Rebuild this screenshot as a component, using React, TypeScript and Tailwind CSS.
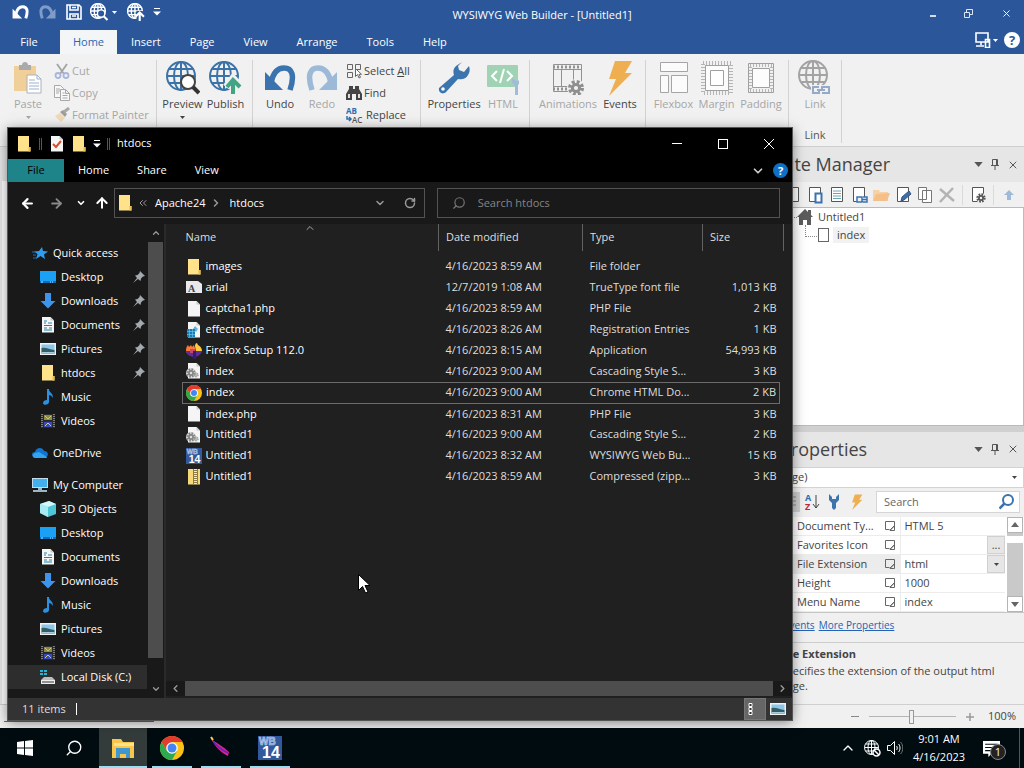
import type { ReactNode } from "react"
import {
  ArrowLeft,
  ArrowRight,
  ArrowUp,
  ChevronDown,
  ChevronLeft,
  ChevronRight,
  ChevronUp,
  ChevronsLeft,
  RotateCw,
  Search,
  X,
} from "lucide-react"

interface IconProps {
  className?: string
}

function UndoIcon({ className = "" }: IconProps) {
  return (
    <svg viewBox="0 0 32 28" className={className} fill="currentColor">
      <path d="M1 8v18h18z" />
      <path d="M7 19C9 9 14 4 20 4c8 0 11 7 6 22" fill="none" stroke="currentColor" strokeWidth="5.5" />
    </svg>
  )
}

function GlobeLines() {
  return (
    <g fill="none">
      <circle cx="15" cy="15" r="14" />
      <ellipse cx="15" cy="15" rx="7" ry="14" />
      <path d="M15 1v28M1 15h28M3 8h24M3 22h24" />
    </g>
  )
}

function PreviewIcon({ className = "" }: IconProps) {
  return (
    <svg viewBox="0 0 34 34" className={className} strokeWidth="2" stroke="#3b73a8">
      <GlobeLines />
      <circle cx="22" cy="21" r="7" fill="#fff" stroke="#444" />
      <path d="m27 26 6 6" stroke="#333" strokeWidth="4" />
    </svg>
  )
}

function PublishIcon({ className = "" }: IconProps) {
  return (
    <svg viewBox="0 0 34 34" className={className} strokeWidth="2" stroke="#3b73a8">
      <GlobeLines />
      <path d="M24 34V18m-7 8 7-9 8 9" stroke="#f0f0f0" strokeWidth="7" fill="none" />
      <path d="M24 33V19m-6 7 6-7 7 7" stroke="#41a583" strokeWidth="4" fill="none" />
    </svg>
  )
}

function WhiteGlobe({ kind }: { kind: "preview" | "publish" }) {
  return (
    <svg viewBox="0 0 34 34" className="size-[18px]" strokeWidth="2.6" stroke="#fff">
      <GlobeLines />
      {kind === "preview" ? (
        <>
          <circle cx="21" cy="20" r="7" fill="#2b579a" />
          <path d="m26 25 7 7" strokeWidth="4" />
        </>
      ) : (
        <>
          <path d="M24 34V15" stroke="#2b579a" strokeWidth="12" />
          <path d="M24 34V18m-8 8 8-8 8 8" strokeWidth="4" fill="none" />
        </>
      )}
    </svg>
  )
}

function SaveIcon() {
  return (
    <svg viewBox="0 0 16 16" className="size-4" fill="none" stroke="#fff" strokeWidth="1.6">
      <path d="M1 1h12l2 2v12H1zM4 1v5h8V1M4 15v-5h8v5M6 12h4M6 3.500h4" />
    </svg>
  )
}

function PasteIcon() {
  return (
    <svg viewBox="0 0 32 32" className="size-8">
      <path d="M2 4h22v25H2z" fill="#f0cf99" />
      <path d="M7 3h3c0-4 6-4 6 0h3v5H7z" fill="#aaa" />
      <path d="M15 13h10l4 4v14H15z" fill="#fff" stroke="#aab2bd" />
      <path d="M17 18h6M17 21h10M17 24h10M17 27h10M25 13v4h4" stroke="#9fb2cc" fill="none" />
    </svg>
  )
}

function CutIcon() {
  return (
    <svg viewBox="0 0 16 16" className="size-4" fill="none" strokeWidth="1.800">
      <path d="M3 1l7 10M13 1 6 11" stroke="#a3a3a3" />
      <circle cx="4" cy="12.500" r="2.500" stroke="#a9b6dc" />
      <circle cx="12" cy="12.500" r="2.500" stroke="#a9b6dc" />
    </svg>
  )
}

function CopyIcon() {
  return (
    <svg viewBox="0 0 16 16" className="size-4" fill="#f8f8f8" stroke="#a8a8a8">
      <path d="M.5.500h6l3 3v9h-9zM2 4h4M2 6h4M2 8h3" />
      <path d="M6.500 4.500h5l4 4v7h-9zM11.500 4.500v4h4M8.500 8h2M8.500 10.500h5M8.500 13h5" />
    </svg>
  )
}

function PainterIcon() {
  return (
    <svg viewBox="0 0 16 16" className="size-4">
      <path d="m1 9 5-3 5 5-4 4z" fill="#f0d9b5" />
      <path d="m6 5 5 5 2-3-4-4z" fill="#9d9d9d" />
      <path d="m10 5 5-4" stroke="#a8a8a8" strokeWidth="3" />
    </svg>
  )
}

function SelectAllIcon() {
  return (
    <svg viewBox="0 0 16 16" className="size-4" fill="none" stroke="#666">
      <path d="M1.500 1.500h5v5h-5zM9.500 1.500h5v5h-5zM1.500 9.500h5v5h-5z" />
      <path d="M9.500 5.500v8l2-2 1.500 3.500 1.500-.7-1.500-3h2.500z" fill="#fff" />
    </svg>
  )
}

function FindIcon() {
  return (
    <svg viewBox="0 0 16 16" className="size-4" fill="#444">
      <path d="M3 1h4v3h2V1h4v3l3 5v6h-6V9H6v6H0V9l3-5z" />
      <path d="M2 9h2v4H2zM12 9h2v4h-2z" fill="#ddd" />
    </svg>
  )
}

function ReplaceIcon() {
  return (
    <svg viewBox="0 0 18 22" className="h-[22px] w-[18px]" fontFamily="Open Sans, sans-serif" fontSize="8">
      <text x="0" y="10" fill="#2f6db0" fontWeight="700">AB</text>
      <text x="6" y="19" fill="#555" fontWeight="600">AC</text>
      <path d="M1 12v3h4m-2-2 2 2-2 2" stroke="#2f6db0" strokeWidth="1.500" fill="none" />
    </svg>
  )
}

function WrenchIcon({ className = "size-8" }: IconProps) {
  return (
    <svg viewBox="0 0 32 32" className={className} fill="#3c74ae">
      <path d="M24 0 18 4c-3 3-3 6-2 9L1 26c-1 5 4 7 7 4l12-13c4 1 8 0 10-4 2-3 2-6 1-9l-5 6-5-2-1-4z" />
      <circle cx="5" cy="27" r="1.800" fill="#fff" />
    </svg>
  )
}

function HtmlIcon() {
  return (
    <svg viewBox="0 0 32 34" className="h-[34px] w-8">
      <rect y="4" width="31" height="22" rx="1" fill="#9fd3b4" />
      <path d="m10 10-5 5 5 5M20 10l5 5-5 5M17 8l-4 14" fill="none" stroke="#fff" strokeWidth="2" />
      <path d="M25 17v5l3 2v10h3V24l3-3v-4l-3 3h-2z" fill="#a2bbda" />
    </svg>
  )
}

function Gear({ x, y, r, color }: { x: number; y: number; r: number; color: string }) {
  return (
    <g>
      <circle cx={x} cy={y} r={r} fill="none" stroke={color} strokeWidth={r / 1.5} strokeDasharray={`${r * 0.45} ${r * 0.335}`} />
      <circle cx={x} cy={y} r={r * 0.6} fill="none" stroke={color} strokeWidth={r / 2} />
    </g>
  )
}

function AnimationsIcon() {
  return (
    <svg viewBox="0 0 32 34" className="h-[34px] w-8">
      <g fill="none" stroke="#929292">
        <path d="M1.500 3.500h28v27h-28zM1 8.500h28M1 25.500h28M9.500 8v18M21.500 8v18" />
        <path d="M1 6h28M1 28h28" strokeWidth="3" strokeDasharray="2 2" />
      </g>
      <circle cx="24" cy="27" r="9" fill="#f0f0f0" />
      <Gear x={24} y={27} r={6} color="#8e8e8e" />
    </svg>
  )
}

function BoltIcon({ className = "h-9 w-8" }: IconProps) {
  return (
    <svg viewBox="0 0 32 36" className={className}>
      <path d="M11 1h17l-7 12h7L5 36l7-17H5z" fill="#efae50" />
    </svg>
  )
}

function FlexboxIcon() {
  return (
    <svg viewBox="0 0 32 34" className="h-[34px] w-8" fill="#fbfbfb" stroke="#a5a5a5">
      <path d="M2.500 1.500h27v9h-27zM2.500 14.500h8v17h-8zM13.500 14.500h16v17h-16z" />
    </svg>
  )
}

function BoxModelIcon({ outer }: { outer: boolean }) {
  return (
    <svg viewBox="0 0 34 36" className="h-9 w-[34px]">
      <rect
        x={outer ? 3 : 6}
        y={outer ? 3 : 5}
        width={outer ? 28 : 22}
        height={outer ? 30 : 26}
        fill="none"
        stroke="#b5b5b5"
        strokeWidth="4"
        strokeDasharray="1 2"
      />
      <path d={outer ? "M5.500 5.500h23v25h-23z" : "M8.500 8.500h17v19h-17z"} fill="#fcfcfc" stroke="#a0a0a0" />
      {outer ? (
        <path d="M10.500 10.500h13v15h-13z" fill="#fff" stroke="#a0a0a0" />
      ) : (
        <path d="M4.500 3.500h25v29h-25z" fill="none" stroke="#a0a0a0" />
      )}
    </svg>
  )
}

function LinkIcon() {
  return (
    <svg viewBox="0 0 34 36" className="h-9 w-[34px]" strokeWidth="2" stroke="#a3a3a3">
      <GlobeLines />
      <path d="M13 25h20v11H13z" fill="#f0f0f0" stroke="none" />
      <path d="M21 27h-6v6h6v-3M24 33h7v-6h-7v3M19 30h8" fill="none" stroke="#95aac9" />
    </svg>
  )
}

function FolderIcon({ className = "size-4" }: IconProps) {
  return (
    <svg viewBox="0 0 16 16" className={className}>
      <path d="M2 0h11v11h1.500v4.500H2z" fill="#ffe28a" />
      <path d="M12.500 11h2v4.500h-2z" fill="#e9bd4f" />
    </svg>
  )
}

function PageShape({ children }: { children?: ReactNode }) {
  return (
    <svg viewBox="0 0 16 16" className="size-4">
      <path d="M2 0h8.500L14 3.500V15.500H2z" fill="#f5f5f5" />
      <path d="M10.500 0v3.500H14" fill="#c9c9c9" />
      {children}
    </svg>
  )
}

function StarIcon() {
  return (
    <svg viewBox="0 0 16 16" className="size-4">
      <path d="m10 2 1 4 5 .500-4 3 1 4.500-4.500-3L4 14l1.500-5L2 6.500 7 6z" fill="#2e9df0" />
      <path d="M0 7h4M1 10h3M1 13h3" stroke="#1c6eb5" />
    </svg>
  )
}

function DesktopIcon() {
  return (
    <svg viewBox="0 0 16 16" className="size-4">
      <path d="M0 2h16v12H0z" fill="#1aa1f5" />
      <path d="M0 12h16v2H0z" fill="#0b6dba" />
      <path d="M1 13h2M10 13h1M12 13h1" stroke="#bfe6ff" />
    </svg>
  )
}

function DownloadIcon() {
  return (
    <svg viewBox="0 0 16 16" className="size-4">
      <path d="M5 0h6v8h4.500L8 15.500.5 8H5z" fill="#3d94ec" />
    </svg>
  )
}

function DocumentIcon() {
  return (
    <PageShape>
      <path d="M4 4h3M4 6h2M8 6h4M4 8.500h8M4 11h3M9 11h3M4 13h8" stroke="#2483a8" />
    </PageShape>
  )
}

function PictureIcon() {
  return (
    <svg viewBox="0 0 16 16" className="size-4">
      <path d="M0 2h16v12H0z" fill="#f1f1f1" />
      <path d="M1.500 3.500h13v9h-13z" fill="#8ac7ea" />
      <path d="M1.500 7c5-1 8 2 13 2v3.500h-13z" fill="#355d66" />
      <path d="M1.500 11h13v1.500h-13z" fill="#a9cddc" />
    </svg>
  )
}

function MusicIcon() {
  return (
    <svg viewBox="0 0 16 16" className="size-4">
      <path d="M7 0h2c0 4 5 4 3.500 9-.500-2-2-3-3.500-3v7c0 3-6 4-6 1 0-2 2-3 4-3z" fill="#2a91e0" />
    </svg>
  )
}

function VideoIcon() {
  return (
    <svg viewBox="0 0 16 16" className="size-4">
      <path d="M1 1h14v14H1z" fill="#2a2a2a" />
      <path d="M2 1v14M14 1v14" stroke="#999" strokeWidth="1.500" strokeDasharray="1 1" />
      <path d="M4 2h8v5H4z" fill="#8c8b45" />
      <path d="M4 9h8v5H4z" fill="#3c4bb5" />
      <path d="m5 3 3 3 3-3M5 13l3-3 3 3" stroke="#c8cb7d" fill="none" />
    </svg>
  )
}

function CloudIcon() {
  return (
    <svg viewBox="0 0 16 16" className="size-4">
      <path d="M3 12c-4 0-4-5 0-5 1-5 8-5 9-1 5 0 5 6 1 6z" fill="#1175cf" />
      <path d="M3 13c-3 0-3-4 0-5l4-1 8 5c0 1-1 1-2 1z" fill="#34a4f0" />
    </svg>
  )
}

function ComputerIcon() {
  return (
    <svg viewBox="0 0 16 16" className="size-4">
      <path d="M0 1h16v10H0z" fill="#c2dced" />
      <path d="M1 2h14v8H1z" fill="#43b0ee" />
      <path d="M6 11h4v2H6zM1 13h14v2H1z" fill="#9ab6c6" />
    </svg>
  )
}

function CubeIcon() {
  return (
    <svg viewBox="0 0 16 16" className="size-4">
      <path d="m0 3 9-3 7 3v10l-8 3-8-4z" fill="#4fc5d8" />
      <path d="m0 3 8 3v10l-8-4z" fill="#a6ebf2" />
      <path d="m0 3 9-3 7 3-8 3z" fill="#d2f8fb" />
    </svg>
  )
}

function DiskIcon() {
  return (
    <svg viewBox="0 0 16 16" className="size-4">
      <path d="M0 1h3v2H0zM4 1h3v2H4zM0 4h3v2H0zM4 4h3v2H4z" fill="#25b4d6" />
      <path d="M4 8h8l3 3H1z" fill="#bdbdbd" />
      <path d="M1 11h14v4H1z" fill="#ededed" />
      <path d="M2 12.500h12v1H2z" fill="#333" />
    </svg>
  )
}

function PinIcon() {
  return (
    <svg viewBox="0 0 12 12" className="size-3">
      <path d="m7 0 5 5-2 .500L8 7.500 7.500 10 5 8l-5 4 4-5-2-2.500L4.500 4l2-2z" fill="#a3a9ae" />
    </svg>
  )
}

function ChromeIcon({ className = "size-4" }: IconProps) {
  return (
    <svg viewBox="0 0 24 24" className={className}>
      <circle cx="12" cy="12" r="12" fill="#fbc116" />
      <path d="M1.600 6a12 12 0 0 1 20.800 0H12l-5 9z" fill="#e33b2e" />
      <path d="M1.600 6A12 12 0 0 0 12 24l5-9-10 0z" fill="#2da94f" />
      <circle cx="12" cy="12" r="5.800" fill="#fff" />
      <circle cx="12" cy="12" r="4.500" fill="#4285f4" />
    </svg>
  )
}

function FirefoxIcon() {
  return (
    <svg viewBox="0 0 16 16" className="size-4">
      <path d="M0 9c0-3 0-5 2-7l1 2 2-2 1 2 2-2 1 3v6H2z" fill="#ff7a35" />
      <path d="M9 3c0-2 1-3 2-3l1 2c2 1 4 3 4 6l-6 1z" fill="#ffcb38" />
      <path d="M0 8h16c-1 4-5 6-9 6-4-1-7-3-7-6z" fill="#5b2d98" />
      <path d="M4 6h5v4H4z" fill="#c8466f" />
      <path d="M7 8h3v8H7z" fill="#321d64" />
    </svg>
  )
}

function WbIcon({ className = "size-4" }: IconProps) {
  return (
    <svg viewBox="0 0 24 24" className={className} fontFamily="Liberation Sans, sans-serif" fontWeight="700">
      <path d="M0 0h24v24H0z" fill="#31599b" />
      <text x="1" y="9" fontSize="10" fill="#7e9fd0" stroke="#c7d6ed" strokeWidth=".5">WB</text>
      <text x="4" y="22" fontSize="16" fill="#fff">14</text>
    </svg>
  )
}

function CssIcon() {
  return (
    <PageShape>
      <circle cx="5" cy="10" r="5" fill="#ddd" />
      <Gear x={5} y={10} r={3.500} color="#858585" />
      <Gear x={10} y={12} r={2} color="#999" />
    </PageShape>
  )
}

function RegIcon() {
  return (
    <PageShape>
      <path d="m9 4 3 3-2 3-3-3z" fill="#5fb5de" />
      <path d="M1 7h8v8H1z" fill="#167bb0" />
      <path d="M3.500 7v8M6.500 7v8M1 9.500h8M1 12.500h8" stroke="#67c0e8" strokeWidth=".7" />
    </PageShape>
  )
}

function FontIcon() {
  return (
    <svg viewBox="0 0 16 16" className="size-4">
      <path d="M0 1h12l4 3v9H0z" fill="#e9e9ec" />
      <text x="2" y="12" fontSize="10" fontWeight="700" fontFamily="Liberation Serif, serif" fill="#444">A</text>
    </svg>
  )
}

function ZipIcon() {
  return (
    <svg viewBox="0 0 16 16" className="size-4">
      <path d="M2 0h12v15.500H2z" fill="#f6d978" />
      <path d="M7 0h5v15H7z" fill="#8b7b4d" />
      <path d="M9.500 0v15" stroke="#f4ead0" strokeWidth="3" strokeDasharray="1 1" />
    </svg>
  )
}

function DownTriangle({ className = "" }: IconProps) {
  return (
    <svg viewBox="0 0 10 6" className={className} fill="currentColor">
      <path d="M0 0h10L5 6z" />
    </svg>
  )
}

function OverflowIcon() {
  return (
    <svg viewBox="0 0 8 8" className="size-2" fill="currentColor">
      <path d="M1 0h6v1H1zM0 3.500h8l-4 4z" />
    </svg>
  )
}

function MainTitleBar() {
  return (
    <header className="flex h-[30px] items-center bg-[#2b579a] text-white">
      <div className="flex w-[200px] items-center pb-1.5 pl-3">
        <button type="button" aria-label="Undo"><UndoIcon className="h-4 w-[17px]" /></button>
        <button type="button" aria-label="Redo" className="ml-2.5 text-[#7f9bc8]"><UndoIcon className="h-4 w-[17px] -scale-x-100" /></button>
        <button type="button" aria-label="Save" className="ml-2.5"><SaveIcon /></button>
        <button type="button" aria-label="Preview in browser" className="ml-2 flex items-center gap-1">
          <WhiteGlobe kind="preview" />
          <DownTriangle className="h-[3px] w-[5px]" />
        </button>
        <button type="button" aria-label="Publish site" className="ml-2.5"><WhiteGlobe kind="publish" /></button>
        <button type="button" aria-label="Customize toolbar" className="ml-2"><OverflowIcon /></button>
      </div>
      <h1 className="flex-1 text-center text-[11px]">WYSIWYG Web Builder - [Untitled1]</h1>
      <div className="flex w-[140px] items-center justify-end gap-7 pr-3 pb-1">
        <button type="button" aria-label="Minimize" className="mt-1.5 h-0.5 w-1.5 bg-white/80" />
        <button type="button" aria-label="Restore">
          <svg viewBox="0 0 9 9" className="size-[9px]" fill="none" stroke="#dce6f5">
            <path d="M.5 3.500h5v5h-5zM2.500 3.500v-3h6v5h-3" />
          </svg>
        </button>
        <button type="button" aria-label="Close"><X className="size-[11px]" /></button>
      </div>
    </header>
  )
}

function MainTabs() {
  return (
    <nav className="flex h-6 items-stretch bg-[#2b579a] text-[11px] text-white">
      <button type="button" className="w-[58px]">File</button>
      <button type="button" className="ml-0.5 w-[57px] bg-[#f4f5f7] text-[#2b66b0]">Home</button>
      <div className="flex gap-px">
        {["Insert", "Page", "View", "Arrange", "Tools", "Help"].map((tab) => (
          <button key={tab} type="button" className="px-3.5">{tab}</button>
        ))}
      </div>
      <div className="ml-auto flex items-center gap-0.5 pr-1 pb-1">
        <svg viewBox="0 0 16 16" className="size-4" fill="none" stroke="#fff" strokeWidth="1.600">
          <path d="M1 1h12v9H1zM1 14h8M6 10v3M10.500 7.500h4v8h-4z" fill="#2b579a" />
        </svg>
        <DownTriangle className="h-[3px] w-[5px]" />
        <button type="button" aria-label="Help topics" className="ml-1 size-4 rounded-full bg-white text-[13px] leading-4 font-bold text-[#2b579a]">?</button>
      </div>
    </nav>
  )
}

interface BigButtonProps {
  label: string
  icon: ReactNode
  width: string
  disabled?: boolean
  menu?: boolean
}

function BigButton({ label, icon, width, disabled, menu }: BigButtonProps) {
  return (
    <button type="button" disabled={disabled} className={`flex shrink-0 flex-col items-center ${width} ${disabled ? "text-[#a6a6a6]" : "text-[#444]"}`}>
      <span className="flex h-9 items-center justify-center">{icon}</span>
      <span className="leading-4 whitespace-nowrap">{label}</span>
      {menu ? <DownTriangle className="mt-1 h-[3px] w-[5px]" /> : null}
    </button>
  )
}

function SmallButton({ label, icon, disabled }: { label: ReactNode; icon: ReactNode; disabled?: boolean }) {
  return (
    <button type="button" disabled={disabled} className={`flex h-[22px] items-center gap-0.5 whitespace-nowrap ${disabled ? "text-[#a6a6a6]" : "text-[#444]"}`}>
      {icon}
      {label}
    </button>
  )
}

function RibbonGroup({ children, label, className = "" }: { children: ReactNode; label?: string; className?: string }) {
  return (
    <section className={`flex shrink-0 flex-col border-r border-[#d2d2d2] ${className}`}>
      <div className="flex h-[68px]">{children}</div>
      {label ? <p className="pt-1 text-center leading-4 text-[#555]">{label}</p> : null}
    </section>
  )
}

function Ribbon() {
  return (
    <div className="flex h-[93px] border-b border-[#cfcfcf] bg-[#f1f1f1] pt-1.5 pb-[3px] text-[11px]">
      <RibbonGroup className="w-[157px] pl-0.5">
        <BigButton label="Paste" width="w-[52px]" icon={<PasteIcon />} disabled menu />
        <div>
          <SmallButton label="Cut" icon={<CutIcon />} disabled />
          <SmallButton label="Copy" icon={<CopyIcon />} disabled />
          <SmallButton label="Format Painter" icon={<PainterIcon />} disabled />
        </div>
      </RibbonGroup>
      <RibbonGroup className="w-24 pl-1">
        <BigButton label="Preview" width="w-[43px]" icon={<PreviewIcon className="size-[34px]" />} menu />
        <BigButton label="Publish" width="w-[43px]" icon={<PublishIcon className="size-[34px]" />} />
      </RibbonGroup>
      <RibbonGroup className="w-[168px] pl-1.5">
        <BigButton label="Undo" width="w-[42px]" icon={<UndoIcon className="h-7 w-8 text-[#3b73ae]" />} />
        <BigButton label="Redo" width="w-[42px]" icon={<UndoIcon className="h-7 w-8 -scale-x-100 text-[#9db9d8]" />} disabled />
        <div className="pl-[3px]">
          <SmallButton label={<span>Select <u>A</u>ll</span>} icon={<SelectAllIcon />} />
          <SmallButton label="Find" icon={<FindIcon />} />
          <SmallButton label="Replace" icon={<ReplaceIcon />} />
        </div>
      </RibbonGroup>
      <RibbonGroup className="w-[109px] pl-1">
        <BigButton label="Properties" width="w-[58px]" icon={<WrenchIcon />} />
        <BigButton label="HTML" width="w-10" icon={<HtmlIcon />} disabled />
      </RibbonGroup>
      <RibbonGroup className="w-[116px] pl-2">
        <BigButton label="Animations" width="w-[60px]" icon={<AnimationsIcon />} disabled />
        <BigButton label="Events" width="w-11" icon={<BoltIcon />} />
      </RibbonGroup>
      <RibbonGroup className="w-[143px] pl-1.5">
        <BigButton label="Flexbox" width="w-[43px]" icon={<FlexboxIcon />} disabled />
        <BigButton label="Margin" width="w-[43px]" icon={<BoxModelIcon outer />} disabled />
        <BigButton label="Padding" width="w-[46px]" icon={<BoxModelIcon outer={false} />} disabled />
      </RibbonGroup>
      <RibbonGroup className="w-[53px]" label="Link">
        <BigButton label="Link" width="w-[52px]" icon={<LinkIcon />} disabled />
      </RibbonGroup>
    </div>
  )
}

function PanelHeader({ title }: { title: string }) {
  return (
    <div className="flex h-[35px] items-center bg-[#e6e6e6] pr-[5px] pl-1.5">
      <h2 className="text-[18px] text-[#444]">{title}</h2>
      <div className="ml-auto flex items-center gap-2 text-[#555]">
        <button type="button" aria-label={`${title} menu`}><DownTriangle className="h-[5px] w-[9px]" /></button>
        <button type="button" aria-label={`Pin ${title}`}>
          <svg viewBox="0 0 8 11" className="h-[11px] w-2" fill="none" stroke="currentColor">
            <path d="M1.500 6V.500h5V6M0 6.500h8M4 7v4M5.500 1v5" />
          </svg>
        </button>
        <button type="button" aria-label={`Close ${title}`}><X className="size-3" /></button>
      </div>
    </div>
  )
}

function SheetIcon({ children }: { children?: ReactNode }) {
  return (
    <svg viewBox="0 0 18 18" className="size-[18px]" fill="none" stroke="#555">
      <path d="M3.500 1.500h11v14h-11z" fill="#fff" />
      {children}
    </svg>
  )
}

function SiteManager() {
  return (
    <section className="flex min-h-0 flex-1 flex-col">
      <PanelHeader title="Site Manager" />
      <div className="flex h-[25px] items-center gap-1 bg-[#f0f0f0] pl-2.5">
        <SheetIcon />
        <SheetIcon><path d="M9.500 7.500h6v9h-6z" stroke="#3b73ae" strokeWidth="2" fill="#fff" /></SheetIcon>
        <SheetIcon><path d="M5 5h8M5 7.500h8M5 10h8M5 12.500h8" stroke="#6ca3b2" /></SheetIcon>
        <SheetIcon><path d="M7 11h5v5H7zM12 13.500h5M13 11h4v5h-4" stroke="#3b73ae" strokeWidth="1.500" fill="#f0f0f0" /></SheetIcon>
        <svg viewBox="0 0 18 18" className="size-[18px]"><path d="M1 4h6l1 2h8v9H1z" fill="#f8d2a6" /><path d="m4 8 14-1-3 8H1z" fill="#f4c08a" /></svg>
        <SheetIcon><path d="m7 15 1-4 7-6 2 3-7 6z" fill="#3f6cab" stroke="#34547f" /></SheetIcon>
        <svg viewBox="0 0 18 18" className="size-[18px]" fill="#fff" stroke="#777"><path d="M2.500 1.500h8v12h-8zM6.500 4.500h9v12h-9z" /></svg>
        <svg viewBox="0 0 18 18" className="size-[18px]" stroke="#b3b3b3" strokeWidth="2.500"><path d="M2 3l14 12M15 2 2 16" /></svg>
        <span className="mx-0.5 h-5 w-px bg-[#dadada]" />
        <SheetIcon><circle cx="12" cy="12" r="5" fill="#f0f0f0" stroke="none" /><Gear x={12} y={12} r={3.500} color="#555" /></SheetIcon>
        <span className="mx-0.5 h-5 w-px bg-[#dadada]" />
        <svg viewBox="0 0 18 18" className="size-[18px]"><path d="m9 4 5 5h-3v5H7V9H4z" fill="#9dbbd9" /></svg>
      </div>
      <div className="flex-1 border border-[#bababa] bg-white text-[11px] text-[#444]">
        <div className="flex h-[18px] items-center pl-3.5">
          <span className="w-2 border-t border-dotted border-[#888]" />
          <svg viewBox="0 0 16 16" className="size-4"><path d="M8 0 0 8h2v8h4v-5h4v5h4V8h2l-2-2V1h-3v2z" fill="#5c5c5c" /></svg>
          <span className="ml-[5px]">Untitled1</span>
        </div>
        <div className="flex h-[18px] items-center pl-[30px]">
          <span className="mb-2 h-3 w-3 border-b border-l border-dotted border-[#888]" />
          <span className="ml-px h-3.5 w-[11px] border border-[#666]" />
          <span className="ml-1 bg-[#f2f2f2] px-1">index</span>
        </div>
      </div>
    </section>
  )
}

const properties = [
  { name: "Document Ty...", value: "HTML 5" },
  { name: "Favorites Icon", value: "" },
  { name: "File Extension", value: "html" },
  { name: "Height", value: "1000" },
  { name: "Menu Name", value: "index" },
]

function PropertyGrid() {
  return (
    <div className="flex border-b border-[#c6c6c6] bg-white pr-px">
      <table className="w-full table-fixed border-collapse text-[11px] text-[#444]">
        <tbody>
          {properties.map((prop) => {
            const active = prop.name === "File Extension"
            return (
              <tr key={prop.name} className="h-[19px] border-b border-[#ececec]">
                <th scope="row" className={`w-[106px] pl-[23px] text-left font-normal whitespace-nowrap ${active ? "bg-[#ececec]" : ""}`}>{prop.name}</th>
                <td className={`w-5 border-r border-[#ececec] ${active ? "bg-[#ececec]" : ""}`}>
                  <svg viewBox="0 0 10 10" className="ml-[5px] size-2.5" fill="none" stroke="#666">
                    <path d="M9.500 5V.500h-9v8h4M9.500 5v4.500H5zM5 9l4-4" />
                  </svg>
                </td>
                <td className="pl-1">
                  <div className="flex h-[18px] items-center">
                    {prop.value}
                    {prop.name === "Favorites Icon" ? (
                      <button type="button" className="ml-auto h-full w-[18px] border border-[#d0d0d0] bg-[#e6e6e6] leading-3">...</button>
                    ) : null}
                    {active ? (
                      <button type="button" aria-label="Choose extension" className="ml-auto flex h-full w-[18px] items-center justify-center border border-[#d0d0d0] bg-[#e6e6e6]">
                        <DownTriangle className="h-[3px] w-[5px]" />
                      </button>
                    ) : null}
                  </div>
                </td>
              </tr>
            )
          })}
        </tbody>
      </table>
      <div className="ml-0.5 flex w-4 shrink-0 flex-col bg-[#c9c9c9] text-[#666]">
        <button type="button" aria-label="Scroll up" className="flex h-4 items-center justify-center border border-[#b4b4b4] bg-white"><DownTriangle className="h-[5px] w-2 rotate-180" /></button>
        <span className="mt-[3px] h-[7px] bg-white" />
        <button type="button" aria-label="Scroll down" className="mt-auto flex h-4 items-center justify-center border border-[#b4b4b4] bg-white"><DownTriangle className="h-[5px] w-2" /></button>
      </div>
    </div>
  )
}

function PropertiesPanel() {
  return (
    <section className="mt-1.5 shrink-0 bg-[#f0f0f0] text-[11px] text-[#444]">
      <PanelHeader title="Properties" />
      <button type="button" className="flex h-[21px] w-full items-center justify-between border border-[#d3d3d3] bg-white pr-1.5 pl-px">
        (page)
        <DownTriangle className="h-[3px] w-[5px]" />
      </button>
      <div className="flex h-[29px] items-center gap-1 pr-1">
        <span className="flex h-5 w-[26px] items-center justify-end bg-[#cfcfcf] pr-1">
          <svg viewBox="0 0 10 12" className="h-3 w-2.5" stroke="#8a8a8a"><path d="M0 1h10M0 5h10M0 9h10" /></svg>
        </span>
        <svg viewBox="0 0 16 22" className="h-[22px] w-4" fontFamily="Open Sans, sans-serif" fontSize="9" fontWeight="700">
          <text x="1" y="10" fill="#2f6db0">A</text>
          <text x="1" y="19" fill="#c3262e">Z</text>
          <path d="M12 4v13m-3-4 3 4 3-4" stroke="#444" fill="none" />
        </svg>
        <svg viewBox="0 0 12 16" className="mx-1 h-4 w-3"><path d="M1 0v6l3 3v5l2 2 2-2V9l3-3V0L8 3v2H4V3z" fill="#3c74ae" /></svg>
        <BoltIcon className="h-4 w-[18px]" />
        <label className="ml-auto flex h-[22px] w-[144px] items-center border border-[#d5d5d5] bg-white">
          <input type="text" aria-label="Search properties" placeholder="Search" className="w-full bg-transparent pl-[7px] placeholder:text-[#666]" />
          <svg viewBox="0 0 16 16" className="mr-1 size-4 shrink-0" fill="none" stroke="#3b73ae" strokeWidth="2"><circle cx="9" cy="6" r="5" /><path d="m5.500 9.500-5 5" strokeWidth="2.500" /></svg>
        </label>
      </div>
      <PropertyGrid />
      <div className="h-[29px] pt-1 pl-2.5 text-[10px] leading-4 text-[#2463b4]">
        <a href="#events" className="underline">Events</a>
        <a href="#more" className="ml-1 underline">More Properties</a>
      </div>
      <div className="h-[62px] border-t border-[#cdcdcd] pt-[3px] pl-1.5">
        <p className="leading-4 font-bold">File Extension</p>
        <p className="pt-px leading-[15px]">Specifies the extension of the output html page.</p>
      </div>
    </section>
  )
}

function StatusBar() {
  return (
    <footer className="flex h-6 shrink-0 items-center border-t border-[#cfcfcf] bg-[#f0f0f0] text-[11px] text-[#444]">
      <a href="#home" aria-label="Web site" className="ml-1 h-[17px] w-[150px] self-start border-b border-[#3b73ae]" />
      <div className="ml-auto flex items-center pr-2">
        <span className="h-px w-2 bg-[#888]" />
        <div className="relative mx-2.5 flex h-4 w-[87px] items-center">
          <input type="range" aria-label="Zoom" className="absolute inset-0 w-full opacity-0" />
          <span className="h-px w-full bg-[#b5b5b5]" />
          <span className="absolute left-10 h-3.5 w-[5px] border border-[#999] bg-[#f0f0f0]" />
        </div>
        <svg viewBox="0 0 8 8" className="mr-1 size-2" stroke="#999" strokeWidth="1.500"><path d="M4 0v8M0 4h8" /></svg>
        <span className="ml-2.5">100%</span>
      </div>
    </footer>
  )
}

interface NavItem {
  label: string
  icon: ReactNode
  pinned?: boolean
  root?: boolean
  gap?: boolean
}

const navItems: NavItem[] = [
  { label: "Quick access", icon: <StarIcon />, root: true },
  { label: "Desktop", icon: <DesktopIcon />, pinned: true },
  { label: "Downloads", icon: <DownloadIcon />, pinned: true },
  { label: "Documents", icon: <DocumentIcon />, pinned: true },
  { label: "Pictures", icon: <PictureIcon />, pinned: true },
  { label: "htdocs", icon: <FolderIcon />, pinned: true },
  { label: "Music", icon: <MusicIcon /> },
  { label: "Videos", icon: <VideoIcon /> },
  { label: "OneDrive", icon: <CloudIcon />, root: true, gap: true },
  { label: "My Computer", icon: <ComputerIcon />, root: true, gap: true },
  { label: "3D Objects", icon: <CubeIcon /> },
  { label: "Desktop", icon: <DesktopIcon /> },
  { label: "Documents", icon: <DocumentIcon /> },
  { label: "Downloads", icon: <DownloadIcon /> },
  { label: "Music", icon: <MusicIcon /> },
  { label: "Pictures", icon: <PictureIcon /> },
  { label: "Videos", icon: <VideoIcon /> },
  { label: "Local Disk (C:)", icon: <DiskIcon /> },
]

interface FileRow {
  name: string
  icon: ReactNode
  date: string
  type: string
  size: string
  focused?: boolean
}

const files: FileRow[] = [
  { name: "images", icon: <FolderIcon />, date: "4/16/2023 8:59 AM", type: "File folder", size: "" },
  { name: "arial", icon: <FontIcon />, date: "12/7/2019 1:08 AM", type: "TrueType font file", size: "1,013 KB" },
  { name: "captcha1.php", icon: <PageShape />, date: "4/16/2023 8:59 AM", type: "PHP File", size: "2 KB" },
  { name: "effectmode", icon: <RegIcon />, date: "4/16/2023 8:26 AM", type: "Registration Entries", size: "1 KB" },
  { name: "Firefox Setup 112.0", icon: <FirefoxIcon />, date: "4/16/2023 8:15 AM", type: "Application", size: "54,993 KB" },
  { name: "index", icon: <CssIcon />, date: "4/16/2023 9:00 AM", type: "Cascading Style S...", size: "3 KB" },
  { name: "index", icon: <ChromeIcon />, date: "4/16/2023 9:00 AM", type: "Chrome HTML Do...", size: "2 KB", focused: true },
  { name: "index.php", icon: <PageShape />, date: "4/16/2023 8:31 AM", type: "PHP File", size: "3 KB" },
  { name: "Untitled1", icon: <CssIcon />, date: "4/16/2023 9:00 AM", type: "Cascading Style S...", size: "2 KB" },
  { name: "Untitled1", icon: <WbIcon />, date: "4/16/2023 8:32 AM", type: "WYSIWYG Web Bu...", size: "15 KB" },
  { name: "Untitled1", icon: <ZipIcon />, date: "4/16/2023 8:59 AM", type: "Compressed (zipp...", size: "3 KB" },
]

function ExplorerHeader() {
  return (
    <>
      <div className="flex h-[31px] items-center bg-black">
        <div className="flex items-center pl-2">
          <FolderIcon />
          <span className="ml-[7px] h-3 w-[3px] border-x border-[#555]" />
          <span className="ml-[7px]"><PageShape><path d="m4 8 3 3 5-6" stroke="#d2502f" strokeWidth="2" fill="none" /></PageShape></span>
          <span className="ml-1.5"><FolderIcon /></span>
          <span className="ml-1.5"><OverflowIcon /></span>
          <span className="ml-1.5 h-3 w-[3px] border-x border-[#555]" />
        </div>
        <h2 className="ml-[7px]">htdocs</h2>
        <div className="ml-auto flex items-center gap-9 pr-[18px]">
          <button type="button" aria-label="Minimize" className="h-px w-2.5 bg-white" />
          <button type="button" aria-label="Maximize" className="size-2.5 border border-white" />
          <button type="button" aria-label="Close window">
            <svg viewBox="0 0 10 10" className="size-2.5" stroke="#fff"><path d="m0 0 10 10M10 0 0 10" /></svg>
          </button>
        </div>
      </div>
      <div className="flex h-[23px] items-stretch bg-black">
        <button type="button" className="w-14 bg-[#1f8489] text-black">File</button>
        {["Home", "Share", "View"].map((tab) => (
          <button key={tab} type="button" className="px-3.5">{tab}</button>
        ))}
        <div className="ml-auto flex items-center gap-2 pr-1">
          <ChevronDown className="size-3.5 text-[#ccc]" strokeWidth={3} />
          <button type="button" aria-label="Explorer help" className="size-[15px] rounded-full bg-[#0f6fc6] leading-[15px] font-bold">?</button>
        </div>
      </div>
      <div className="flex h-[42px] items-center px-3">
        <div className="flex w-[94px] items-center">
          <ArrowLeft className="size-[15px]" strokeWidth={3.5} />
          <ArrowRight className="ml-3.5 size-[15px] text-[#8a8a8a]" strokeWidth={3} />
          <ChevronDown className="ml-3 size-2.5" strokeWidth={4} />
          <ArrowUp className="ml-2 size-4" strokeWidth={3} />
        </div>
        <div className="flex h-[30px] flex-[312] items-center border border-[#535353] bg-[#191919] pr-2 pl-0.5">
          <FolderIcon />
          <ChevronsLeft className="ml-1 size-3 text-[#999]" />
          <span className="ml-1.5">Apache24</span>
          <ChevronRight className="mx-1 size-3 text-[#999]" strokeWidth={3} />
          <span className="ml-1">htdocs</span>
          <ChevronDown className="mr-[18px] ml-auto size-3 text-[#999]" strokeWidth={3} />
          <RotateCw className="size-3 text-[#999]" strokeWidth={3} />
        </div>
        <label className="ml-3 flex h-[30px] flex-[342] items-center border border-[#535353] bg-[#191919] pl-3.5">
          <Search className="size-3.5 -scale-x-100 text-[#777]" />
          <input type="text" aria-label="Search folder" placeholder="Search htdocs" className="ml-3 min-w-0 flex-1 bg-transparent placeholder:text-[#858585]" />
        </label>
      </div>
    </>
  )
}

function Sidebar() {
  return (
    <aside className="flex w-[158px] shrink-0 border-r-2 border-[#2a2a2a]">
      <ul className="w-[140px] pt-[17px]">
        {navItems.map((item, i) => (
          <li
            key={i}
            className={`flex h-6 w-[139px] items-center gap-[5px] ${item.root ? "pl-6" : "pl-8"} ${item.gap ? "mt-2" : ""} ${item.label.startsWith("Local") ? "bg-[#2d2d2d]" : ""}`}
          >
            {item.icon}
            <span className="whitespace-nowrap">{item.label}</span>
            {item.pinned ? <span className="ml-auto pr-0.5"><PinIcon /></span> : null}
          </li>
        ))}
      </ul>
      <div className="flex w-[15px] flex-col items-center text-[#999]">
        <ChevronUp className="my-1 size-2.5" strokeWidth={3} />
        <span className="w-full flex-1 bg-[#4d4d4d]" />
        <ChevronDown className="mt-[26px] mb-1 size-2.5" strokeWidth={3} />
      </div>
    </aside>
  )
}

function FileList() {
  return (
    <section className="flex min-w-0 flex-1 flex-col bg-[#202020]">
      <div className="relative flex-1 pr-2 pl-4">
        <ChevronUp className="absolute -top-0.5 left-[138px] size-3 text-[#aaa]" />
        <table className="w-full table-fixed border-collapse text-[#dedede]">
          <thead>
            <tr className="h-[27px] text-left">
              <th className="pl-[3px] font-normal">Name</th>
              <th className="w-36 border-l border-[#636363] pl-[7px] font-normal">Date modified</th>
              <th className="w-[120px] border-l border-[#636363] pl-[7px] font-normal">Type</th>
              <th className="w-[77px] border-l border-[#636363] pl-[7px] font-normal">Size</th>
              <th aria-label="End" className="w-1 border-r border-[#636363]" />
            </tr>
            <tr className="h-[5px]"><th colSpan={5} /></tr>
          </thead>
          <tbody>
            {files.map((file, i) => {
              const edge = file.focused ? "border-y border-[#6b6b6b]" : ""
              return (
                <tr key={i} className="h-[21px] whitespace-nowrap">
                  <td className={`p-0 ${edge} ${file.focused ? "border-l" : ""}`}>
                    <div className="flex items-center gap-1 pl-[3px] text-white">
                      {file.icon}
                      {file.name}
                    </div>
                  </td>
                  <td className={`p-0 pl-[7px] ${edge}`}>{file.date}</td>
                  <td className={`p-0 pl-[7px] ${edge}`}>{file.type}</td>
                  <td className={`p-0 pr-[3px] text-right ${edge} ${file.focused ? "border-r" : ""}`}>{file.size}</td>
                  <td className="p-0" />
                </tr>
              )
            })}
          </tbody>
        </table>
      </div>
      <div className="mb-0.5 flex h-[15px] items-center bg-[#191919] text-[#999]">
        <ChevronLeft className="mx-1 size-[11px] shrink-0" strokeWidth={3} />
        <span className="h-full flex-1 bg-[#4d4d4d]" />
        <ChevronRight className="mx-1 size-[11px] shrink-0" strokeWidth={3} />
      </div>
    </section>
  )
}

function ExplorerWindow() {
  return (
    <div className="absolute top-32 right-[232px] bottom-12 left-2 flex flex-col bg-[#191919] text-[11px] text-white shadow-[0_2px_12px_rgba(0,0,0,0.5)] ring-1 ring-[#555]">
      <ExplorerHeader />
      <div className="flex min-h-0 flex-1">
        <Sidebar />
        <FileList />
      </div>
      <div className="flex h-[22px] items-center bg-[#333] pl-3.5 text-[#dedede]">
        11 items
        <span className="ml-2.5 h-3 w-px bg-white" />
        <div className="ml-auto flex h-full items-center">
          <button type="button" aria-label="Details view" className="flex h-full w-[22px] items-center border border-[#777] bg-[#666] pl-[3px]">
            <svg viewBox="0 0 6 12" className="h-3 w-1.5" fill="#333" stroke="#fff"><path d="M1 .500h3v3H1zM1 4.500h3v3H1zM1 8.500h3v3H1z" /></svg>
          </button>
          <button type="button" aria-label="Thumbnail view" className="w-[26px] pl-1"><PictureIcon /></button>
        </div>
      </div>
    </div>
  )
}

function TaskButton({ label, children, running, active }: { label: string; children: ReactNode; running?: boolean; active?: boolean }) {
  return (
    <button
      type="button"
      aria-label={label}
      className={`relative flex h-full w-12 items-center justify-center ${active ? "bg-[#343b3b]" : ""}`}
    >
      {children}
      {running ? <span className={`absolute bottom-0 h-0.5 bg-[#99ddf0] ${active ? "w-12" : "w-10"}`} /> : null}
    </button>
  )
}

function Taskbar() {
  return (
    <footer className="flex h-10 shrink-0 items-center bg-[#000c10] text-white">
      <div className="flex h-full gap-px pl-px">
        <TaskButton label="Start">
          <svg viewBox="0 0 16 16" className="size-4" fill="#fff"><path d="m0 2 7-1v6.500H0zM8 1l8-1v7.500H8zM0 8.500h7V15l-7-1zM8 8.500h8V16l-8-1z" /></svg>
        </TaskButton>
        <TaskButton label="Search"><Search className="size-[18px] -scale-x-100" strokeWidth={1.800} /></TaskButton>
        <TaskButton label="File Explorer" running active>
          <svg viewBox="0 0 24 24" className="size-6">
            <path d="M1 3h9l2 3h11v16H1z" fill="#f7c64a" />
            <path d="M3 7h20v3H3z" fill="#ffe18b" />
            <path d="M5 12h14v10h-4v-4H9v4H5z" fill="#3f97cf" />
          </svg>
        </TaskButton>
        <TaskButton label="Chrome" running><ChromeIcon className="size-6" /></TaskButton>
        <TaskButton label="Apache" running>
          <svg viewBox="0 0 24 24" className="size-6" fill="none">
            <path d="M2 3c4 3 13 8 18 13l-1 4C11 16 6 10 2 3z" fill="#e0208c" />
            <path d="M4 5c4 6 9 9 15 12" stroke="#5829bd" strokeWidth="1.500" />
            <path d="M2 1l2 3" stroke="#f0d44a" strokeWidth="2" />
          </svg>
        </TaskButton>
        <TaskButton label="WYSIWYG Web Builder" running><WbIcon className="size-6" /></TaskButton>
      </div>
      <div className="ml-auto flex h-full items-center">
        <ChevronUp className="size-4" />
        <svg viewBox="0 0 34 34" className="ml-2 size-[17px]" stroke="#fff" strokeWidth="2">
          <GlobeLines />
          <circle cx="25" cy="25" r="7" fill="#000c10" strokeWidth="3" />
          <path d="m20 20 10 10" strokeWidth="3" />
        </svg>
        <svg viewBox="0 0 16 14" className="ml-1.5 h-3.5 w-4" fill="none" stroke="#fff">
          <path d="M.5 4.500h3l4-4v13l-4-4h-3zM9.500 5c1 1 1 3 0 4M11.500 3c2 2 2 6 0 8" />
          <path d="M13.500 1c3 3 3 9 0 12" stroke="#777" />
        </svg>
        <p className="ml-2 w-[56px] text-center text-[11px] leading-[18px] whitespace-nowrap">
          9:01 AM
          <br />
          4/16/2023
        </p>
        <button type="button" aria-label="Notifications" className="relative ml-4 h-5 w-8">
          <svg viewBox="0 0 16 16" className="size-[17px]"><path d="M0 1h16v12H8l-3 3v-3H0z" fill="#fff" /><path d="M2 4h12M2 7h12M2 10h9" stroke="#000c10" /></svg>
          <span className="absolute top-1.5 left-[7px] size-4 rounded-full border border-[#888] bg-[#222] text-[11px] leading-3.5">1</span>
        </button>
        <span className="ml-1 h-full w-[5px] border-l border-[#555]" />
      </div>
    </footer>
  )
}

export default function App() {
  return (
    <div className="relative flex h-screen flex-col overflow-hidden bg-[#e6e6e6] font-['Open_Sans','Noto_Sans',sans-serif]">
      <MainTitleBar />
      <MainTabs />
      <Ribbon />
      <main className="flex min-h-0 flex-1 bg-[#d0d0d0]">
        <div className="flex-1 border-t-[34px] border-l-2 border-[#e6e6e6] bg-white" />
        <aside className="flex w-[250px] shrink-0 flex-col">
          <SiteManager />
          <PropertiesPanel />
        </aside>
      </main>
      <StatusBar />
      <Taskbar />
      <ExplorerWindow />
      <svg viewBox="0 0 12 20" className="absolute top-[574px] left-[358px] h-5 w-3" fill="#fff" stroke="#000">
        <path d="M.5.500v16l4-4 3 6.500 2.500-1-3-6.500h5z" />
      </svg>
    </div>
  )
}
